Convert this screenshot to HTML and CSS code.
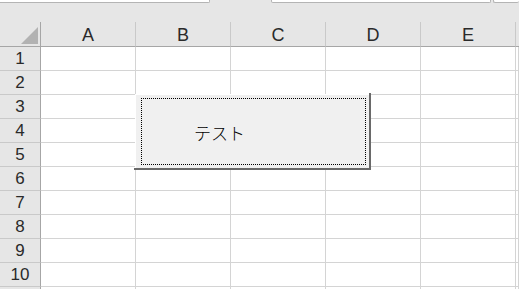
FILE: index.html
```html
<!DOCTYPE html>
<html lang="ja">
<head>
<meta charset="utf-8">
<title>Sheet</title>
<link rel="stylesheet" href="styles.css">
</head>
<body>
<div class="topbar">
  <div class="fbox fbox-name"></div>
  <div class="fbox fbox-formula"></div>
  <div class="fbox fbox-end"></div>
</div>
<div class="sheet">
  <div class="corner"><svg width="17" height="17" viewBox="0 0 17 17"><polygon points="17,0 17,17 0,17" fill="#b2b2b2"/></svg></div>
  <div class="colh">A</div><div class="colh">B</div><div class="colh">C</div><div class="colh">D</div><div class="colh">E</div><div class="colh last"></div>

  <div class="rowh">1</div><div class="cell"></div><div class="cell"></div><div class="cell"></div><div class="cell"></div><div class="cell"></div><div class="cell"></div>
  <div class="rowh">2</div><div class="cell"></div><div class="cell"></div><div class="cell"></div><div class="cell"></div><div class="cell"></div><div class="cell"></div>
  <div class="rowh">3</div><div class="cell"></div><div class="cell"></div><div class="cell"></div><div class="cell"></div><div class="cell"></div><div class="cell"></div>
  <div class="rowh">4</div><div class="cell"></div><div class="cell"></div><div class="cell"></div><div class="cell"></div><div class="cell"></div><div class="cell"></div>
  <div class="rowh">5</div><div class="cell"></div><div class="cell"></div><div class="cell"></div><div class="cell"></div><div class="cell"></div><div class="cell"></div>
  <div class="rowh">6</div><div class="cell"></div><div class="cell"></div><div class="cell"></div><div class="cell"></div><div class="cell"></div><div class="cell"></div>
  <div class="rowh">7</div><div class="cell"></div><div class="cell"></div><div class="cell"></div><div class="cell"></div><div class="cell"></div><div class="cell"></div>
  <div class="rowh">8</div><div class="cell"></div><div class="cell"></div><div class="cell"></div><div class="cell"></div><div class="cell"></div><div class="cell"></div>
  <div class="rowh">9</div><div class="cell"></div><div class="cell"></div><div class="cell"></div><div class="cell"></div><div class="cell"></div><div class="cell"></div>
  <div class="rowh">10</div><div class="cell"></div><div class="cell"></div><div class="cell"></div><div class="cell"></div><div class="cell"></div><div class="cell"></div>
  <div class="rowh"></div><div class="cell"></div><div class="cell"></div><div class="cell"></div><div class="cell"></div><div class="cell"></div><div class="cell"></div>
</div>
<div class="btn">
  <div class="btn-face">
    <div class="btn-focus"><span class="btn-label">テスト</span></div>
  </div>
</div>
</body>
</html>
```

FILE: styles.css
```css
html, body {
  margin: 0;
  padding: 0;
  overflow: hidden;
  background: #ffffff;
}
body {
  width: 519px;
  height: 289px;
  position: relative;
  font-family: "Liberation Sans", Arial, sans-serif;
}
.topbar {
  height: 22px;
  background: #e6e6e6;
  display: flex;
  align-items: flex-start;
}
.fbox {
  height: 2px;
  background: #ffffff;
  border-bottom: 1px solid #b4b4b4;
  border-right: 1px solid #b4b4b4;
  border-bottom-right-radius: 2px;
}
.fbox-name { width: 209px; }
.fbox-formula {
  width: 218px;
  margin-left: 61px;
  border-left: 1px solid #b4b4b4;
  border-bottom-left-radius: 2px;
}
.fbox-end {
  flex: 1;
  margin-left: 2px;
  border-left: 1px solid #b4b4b4;
  border-right: none;
  border-bottom-left-radius: 2px;
}
.sheet {
  display: grid;
  grid-template-columns: 41px repeat(5, 95px) 1fr;
  grid-template-rows: 25px;
  grid-auto-rows: 24px;
}
.corner, .colh, .rowh, .cell {
  box-sizing: border-box;
}
.corner {
  background: #e6e6e6;
  border-right: 1px solid #a6a6a6;
  border-bottom: 1px solid #a6a6a6;
  display: flex;
  justify-content: flex-end;
  align-items: flex-end;
  padding: 0 2px 2px 0;
}
.corner svg { display: block; }
.colh {
  background: #e6e6e6;
  border-right: 1px solid #c9c9c9;
  border-bottom: 1px solid #a6a6a6;
  display: flex;
  justify-content: center;
  align-items: center;
  padding-top: 2px;
  font-size: 18px;
  color: #2a2a2a;
}
.colh.last { border-right: none; }
.rowh {
  background: #e6e6e6;
  border-right: 1px solid #a6a6a6;
  border-bottom: 1px solid #c9c9c9;
  display: flex;
  justify-content: center;
  align-items: center;
  padding-top: 1px;
  font-size: 17px;
  color: #2a2a2a;
}
.cell {
  border-right: 1px solid #d4d4d4;
  border-bottom: 1px solid #d4d4d4;
}
.btn {
  position: absolute;
  left: 134px;
  top: 93px;
  width: 237px;
  height: 77px;
  box-sizing: border-box;
  padding: 1px 0 0 1px;
  border-right: 2px solid #696969;
  border-bottom: 2px solid #696969;
}
.btn-face {
  box-sizing: border-box;
  height: 100%;
  background: #f0f0f0;
  box-shadow: inset 1px 1px 0 #ffffff;
  padding: 4px 3px 3px 6px;
}
.btn-focus {
  box-sizing: border-box;
  height: 100%;
  border: 1px dotted #000000;
  display: flex;
  align-items: center;
  padding-left: 52px;
}
.btn-label {
  font-family: "Noto Sans CJK JP", sans-serif;
  font-size: 17px;
  font-weight: 300;
  color: #000000;
  line-height: 1;
  padding-top: 1px;
}
```
